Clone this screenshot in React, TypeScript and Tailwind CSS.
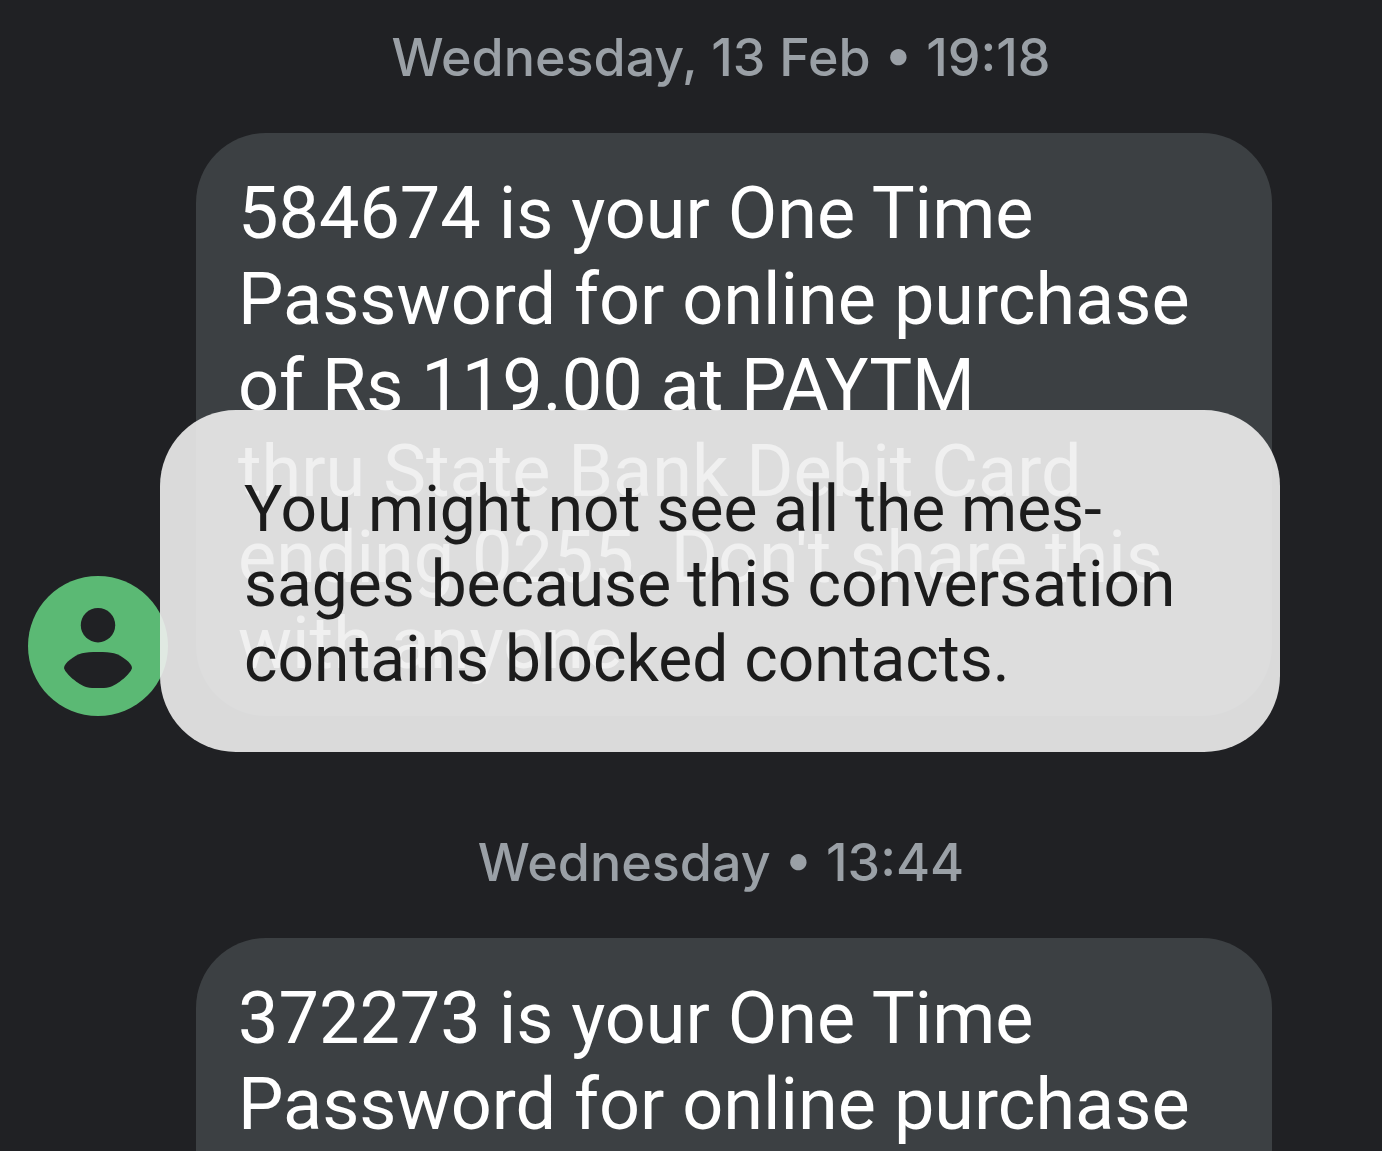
import { type ReactNode } from "react";

const Timestamp = ({ children }: { children: ReactNode }) => (
  <time className="block pl-[60px] text-center font-['Inter',sans-serif] text-[52px] leading-[64px] font-medium text-[#9aa0a6]">
    {children}
  </time>
);

const Bubble = ({ children }: { children: ReactNode }) => (
  <p className="flex-1 rounded-[70px] bg-[#3c4043] px-[42px] pt-[38px] pb-[29px] text-[72px] leading-[86px] text-white">
    {children}
  </p>
);

const Avatar = () => (
  <svg viewBox="0 0 140 140" className="size-[140px] shrink-0" aria-hidden="true">
    <circle cx="70" cy="70" r="70" fill="#5bb974" />
    <circle cx="70" cy="49.2" r="17.2" fill="#202124" />
    <path
      fill="#202124"
      d="M36 92C36 87 46 79.5 54 77.2C61 75.5 79 75.5 86 77.2C94 79.5 104 87 104 92C103 97 90 109 81 111.2C75 112.4 65 112.4 59 111.2C50 109 37 97 36 92z"
    />
  </svg>
);

const App = () => {
  return (
    <main className="h-screen overflow-hidden bg-[#202124] pt-[26px] font-['Roboto',sans-serif]">
      <Timestamp>Wednesday, 13 Feb • 19:18</Timestamp>

      <section className="relative mt-[43px] flex items-end gap-7 pr-[110px] pl-7">
        <Avatar />
        <Bubble>
          584674 is your One Time
          <br />
          Password for online purchase
          <br />
          of Rs 119.00 at PAYTM
          <br />
          thru State Bank Debit Card
          <br />
          ending 0255. Don't share this
          <br />
          with anyone
        </Bubble>

        {/* Toast over the conversation */}
        <div
          role="status"
          className="absolute right-[102px] -bottom-9 left-40 rounded-[76px] bg-[#eeeeee]/90 px-[84px] pt-[62px] pb-[55px] text-[64px] leading-[75px] text-[#1c1c1c]"
        >
          You might not see all the mes-
          <br />
          sages because this conversation
          <br />
          contains blocked contacts.
        </div>
      </section>

      <div className="mt-[115px]">
        <Timestamp>Wednesday • 13:44</Timestamp>
      </div>

      <section className="mt-[43px] flex items-end gap-7 pr-[110px] pl-7">
        <Avatar />
        <Bubble>
          372273 is your One Time
          <br />
          Password for online purchase
          <br />
          of Rs 119.00 at PAYTM
          <br />
          thru State Bank Debit Card
          <br />
          ending 0255. Don't share this
          <br />
          with anyone
        </Bubble>
      </section>
    </main>
  );
};

export default App;
